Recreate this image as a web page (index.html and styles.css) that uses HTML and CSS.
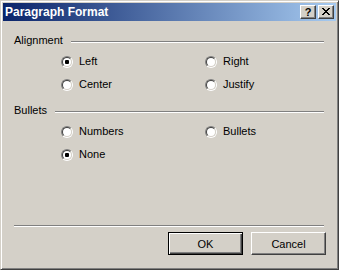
FILE: index.html
```html
<!DOCTYPE html>
<html>
<head>
<meta charset="utf-8">
<link rel="stylesheet" href="styles.css">
</head>
<body>
<div class="window">
  <div class="titlebar">
    <span class="title">Paragraph Format</span>
    <div class="caption-buttons">
      <span class="cbtn help">?</span>
      <span class="cbtn close">
        <svg width="8" height="7" viewBox="0 0 8 7" shape-rendering="crispEdges">
          <path d="M0 0h2v1h-2z M6 0h2v1h-2z M1 1h2v1h-2z M5 1h2v1h-2z M2 2h4v1h-4z M3 3h2v1h-2z M2 4h4v1h-4z M1 5h2v1h-2z M5 5h2v1h-2z M0 6h2v1h-2z M6 6h2v1h-2z" fill="#000"/>
        </svg>
      </span>
    </div>
  </div>
  <div class="content">
    <div class="group-header"><span class="group-label">Alignment</span><span class="etch"></span></div>
    <div class="radio-grid">
      <label class="radio checked"><span class="rb"><span class="rb-in"><span class="dot"></span></span></span>Left</label>
      <label class="radio"><span class="rb"><span class="rb-in"><span class="dot"></span></span></span>Right</label>
      <label class="radio"><span class="rb"><span class="rb-in"><span class="dot"></span></span></span>Center</label>
      <label class="radio"><span class="rb"><span class="rb-in"><span class="dot"></span></span></span>Justify</label>
    </div>
    <div class="group-header second"><span class="group-label">Bullets</span><span class="etch"></span></div>
    <div class="radio-grid">
      <label class="radio"><span class="rb"><span class="rb-in"><span class="dot"></span></span></span>Numbers</label>
      <label class="radio"><span class="rb"><span class="rb-in"><span class="dot"></span></span></span>Bullets</label>
      <label class="radio checked"><span class="rb"><span class="rb-in"><span class="dot"></span></span></span>None</label>
    </div>
    <div class="footer">
      <div class="etch full"></div>
      <div class="buttons">
        <button class="btn default">OK</button>
        <button class="btn">Cancel</button>
      </div>
    </div>
  </div>
</div>
</body>
</html>
```

FILE: styles.css
```css
html, body {
  margin: 0;
  padding: 0;
  background: #d4d0c8;
}

.window {
  box-sizing: border-box;
  width: 339px;
  height: 270px;
  background: #d4d0c8;
  border: 1px solid;
  border-color: #d4d0c8 #404040 #404040 #d4d0c8;
  box-shadow: inset 1px 1px 0 #ffffff, inset -1px -1px 0 #808080;
  padding: 2px;
  display: flex;
  flex-direction: column;
  font-family: "Liberation Sans", Arial, sans-serif;
  font-size: 11px;
  color: #000;
}

.titlebar {
  height: 18px;
  flex: none;
  display: flex;
  align-items: center;
  padding: 0 2px;
  background: linear-gradient(to right, #0a246a, #a6caf0);
}

.title {
  color: #fff;
  font-weight: bold;
  font-size: 12px;
  line-height: 18px;
  white-space: nowrap;
}

.caption-buttons {
  margin-left: auto;
  display: flex;
  gap: 2px;
}

.cbtn {
  box-sizing: border-box;
  width: 16px;
  height: 14px;
  background: #d4d0c8;
  border: 1px solid;
  border-color: #ffffff #404040 #404040 #ffffff;
  box-shadow: inset -1px -1px 0 #808080;
  display: flex;
  align-items: center;
  justify-content: center;
}

.help {
  font-weight: bold;
  font-size: 11px;
  line-height: 12px;
  padding-bottom: 1px;
}

.close svg {
  display: block;
  margin-bottom: 1px;
}

.content {
  flex: 1;
  display: flex;
  flex-direction: column;
  padding: 13px 10px 12px 11px;
}

.group-header {
  display: flex;
  align-items: flex-start;
  height: 13px;
  line-height: 13px;
}

.group-header.second {
  margin-top: 13px;
}

.etch {
  flex: 1;
  height: 0;
  border-top: 1px solid #808080;
  border-bottom: 1px solid #ffffff;
  margin: 7px 2px 0 8px;
}

.etch.full {
  flex: none;
  margin: 0 2px 0 0;
}

.radio-grid {
  display: grid;
  grid-template-columns: 144px 144px;
  row-gap: 10px;
  margin: 8px 0 0 47px;
}

.radio {
  display: flex;
  align-items: center;
  height: 13px;
  line-height: 13px;
  gap: 6px;
  white-space: nowrap;
}

.rb {
  box-sizing: border-box;
  width: 12px;
  height: 12px;
  border-radius: 50%;
  border: 1px solid;
  border-color: #808080 #ffffff #ffffff #808080;
  flex: none;
}

.rb-in {
  box-sizing: border-box;
  display: flex;
  align-items: center;
  justify-content: center;
  width: 10px;
  height: 10px;
  border-radius: 50%;
  border: 1px solid;
  border-color: #404040 #d4d0c8 #d4d0c8 #404040;
  background: #ffffff;
}

.dot {
  width: 4px;
  height: 4px;
  border-radius: 1px;
  background: transparent;
}

.radio.checked .dot {
  background: #000;
}

.footer {
  margin-top: auto;
  display: flex;
  flex-direction: column;
}

.buttons {
  margin-top: 5px;
  display: flex;
  justify-content: flex-end;
  gap: 8px;
}

.btn {
  box-sizing: border-box;
  width: 75px;
  height: 23px;
  margin: 0;
  padding: 0;
  background: #d4d0c8;
  font-family: "Liberation Sans", Arial, sans-serif;
  font-size: 11px;
  color: #000;
  border: 1px solid;
  border-color: #ffffff #404040 #404040 #ffffff;
  box-shadow: inset -1px -1px 0 #808080;
}

.btn.default {
  border-color: #000;
  box-shadow: inset 1px 1px 0 #ffffff, inset -1px -1px 0 #404040, inset -2px -2px 0 #808080;
}
```
